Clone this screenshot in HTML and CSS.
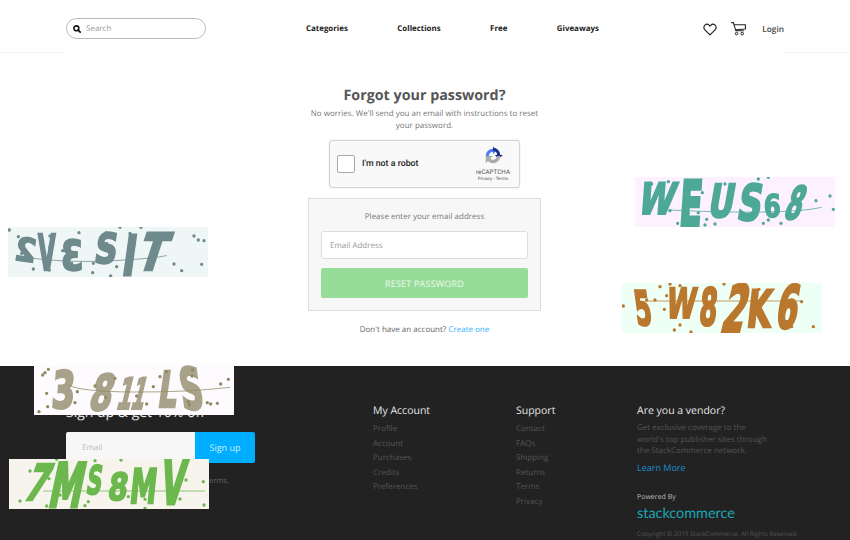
FILE: index.html
```html
<!DOCTYPE html>
<html lang="en">
<head>
<meta charset="utf-8">
<title>Forgot your password?</title>
<link rel="stylesheet" href="styles.css">
</head>
<body>
<div class="logo-clip"><span></span><span></span></div>
<header class="site-header">
  <div class="header-inner">
    <label class="search">
      <svg class="search-icon" viewBox="0 0 10 10" width="8" height="8"><circle cx="4.200" cy="4.200" r="3.100" fill="none" stroke="#111" stroke-width="1.900"/><path d="M6.400 6.400L9 9" stroke="#111" stroke-width="2.200" stroke-linecap="round"/></svg>
      <span class="search-text">Search</span>
    </label>
    <nav class="main-nav">
      <a>Categories</a><a>Collections</a><a>Free</a><a>Giveaways</a>
    </nav>
    <div class="user-nav">
      <svg class="heart" viewBox="0 0 14 13" width="14" height="13"><path d="M7 11.900L1.900 6.800C.5 5.400.6 3.300 1.900 2.100 3.200 1 5.200 1.100 6.300 2.300L7 3.100l.7-.8C8.800 1.100 10.800 1 12.100 2.100c1.300 1.200 1.400 3.300 0 4.700z" fill="none" stroke="#222" stroke-width="1.200" stroke-linejoin="round"/></svg>
      <svg class="cart" viewBox="0 0 15 14" width="15" height="14"><path d="M.3.6h2.100l2.400 8.200h8M3.200 2.800h11.200v4.300l-9.900.7" fill="none" stroke="#222" stroke-width="1.100"/><circle cx="5.600" cy="11.600" r="1.300" fill="none" stroke="#222"/><circle cx="11.200" cy="11.600" r="1.300" fill="none" stroke="#222"/></svg>
      <a class="login">Login</a>
    </div>
  </div>
</header>

<main class="main">
  <h1 class="title">Forgot your password?</h1>
  <p class="lead">No worries. We'll send you an email with instructions to reset your password.</p>
  <div class="recaptcha">
    <span class="check"></span>
    <span class="robot">I'm not a robot</span>
    <div class="rc-brand">
      <svg viewBox="0 0 22 22" width="20" height="20"><path d="M3 11A8 8 0 0 1 11 3V0l4 5-4 4V6.500A4.500 4.500 0 0 0 6.500 11z" fill="#4a7ff0"/><path d="M11 3a8 8 0 0 1 8 8h3l-5 4-4-4h2.500A4.500 4.500 0 0 0 11 6.500z" fill="#1c2d8c" transform="translate(0 -1)"/><path d="M19 11a8 8 0 0 1-13.700 5.600L3 19V11h8l-3 3a4.500 4.500 0 0 0 7.500-3z" fill="#ababab"/></svg>
      <span class="rc-name">reCAPTCHA</span>
      <span class="rc-links">Privacy - Terms</span>
    </div>
  </div>
  <form class="reset-box">
    <p class="reset-label">Please enter your email address</p>
    <div class="reset-input">Email Address</div>
    <div class="reset-btn">RESET PASSWORD</div>
  </form>
  <p class="signup-hint">Don't have an account? <a>Create one</a></p>
</main>

<footer class="footer">
  <div class="footer-grid">
    <div class="col-signup">
      <h3 class="signup-title">Sign up &amp; get 10% off</h3>
      <div class="signup-form">
        <div class="signup-input">Email</div>
        <div class="signup-btn">Sign up</div>
      </div>
      <p class="signup-terms"><span>By signing up, you agree to our Privacy &amp; Terms.</span></p>
    </div>
    <div>
      <h4 class="col-title">My Account</h4>
      <ul class="links"><li>Profile</li><li>Account</li><li>Purchases</li><li>Credits</li><li>Preferences</li></ul>
    </div>
    <div>
      <h4 class="col-title">Support</h4>
      <ul class="links"><li>Contact</li><li>FAQs</li><li>Shipping</li><li>Returns</li><li>Terms</li><li>Privacy</li></ul>
    </div>
    <div>
      <h4 class="col-title">Are you a vendor?</h4>
      <p class="vendor-copy">Get exclusive coverage to the world's top publisher sites through the StackCommerce network.</p>
      <a class="learn">Learn More</a>
      <p class="powered">Powered By</p>
      <p class="stack">stackcommerce</p>
      <p class="copyright">Copyright © 2019 StackCommerce. All Rights Reserved.</p>
    </div>
  </div>
</footer>

<svg class="captcha cap-a" viewBox="24 21 600 150" width="200" height="50">
  <rect class="bg" x="24" y="21" width="600" height="150"/>
  <g class="ink">
    <text transform="translate(104 128) rotate(8) scale(-.78 .82)">2</text>
    <text transform="translate(114 150) scale(.58 1.25)">V</text>
    <text transform="translate(250 150) scale(-.82 1.05)">3</text>
    <text transform="translate(280 130) skewX(-8) scale(.8 1.05)">S</text>
    <text transform="translate(362 165) skewX(-8) scale(.9 1.4)">I</text>
    <text transform="translate(405 150) skewX(-18) scale(1 1.3)">T</text>
  </g>
  <path class="line" d="M75 112Q200 130 340 122T500 106"/>
  <path class="dots" d="M28 30h0M55 50h0M150 48h0M237 38h0M318 38h0M360 22h0M390 40h0M423 22h0M582 48h0M595 60h0M612 62h0M150 80h0M188 92h0M232 72h0M320 70h0M65 100h0M100 147h0M148 150h0M215 130h0M280 130h0M295 125h0M278 158h0M350 140h0M332 168h0M522 132h0M545 152h0M605 133h0"/>
</svg>

<svg class="captcha cap-b" viewBox="30 21 600 150" width="200" height="50">
  <rect class="bg" x="30" y="21" width="600" height="150"/>
  <g class="ink">
    <text transform="translate(34 132) skewX(-14) scale(.82 1.1)">W</text>
    <text transform="translate(160 168) skewX(-4) scale(.85 1.6)">E</text>
    <text transform="translate(245 142) skewX(-10) scale(.8 1.15)">U</text>
    <text transform="translate(332 150) skewX(-10) scale(.85 1.25)">S</text>
    <text transform="translate(416 142) scale(.62 .8)">6</text>
    <text transform="translate(472 146) skewX(-18) scale(.62 1.15)">8</text>
  </g>
  <path class="line" d="M130 120Q300 128 420 126T590 112"/>
  <path class="dots" d="M130 35h0M80 42h0M400 27h0M430 22h0M300 42h0M232 68h0M385 100h0M530 75h0M615 78h0M573 92h0M625 118h0M135 122h0M220 128h0M190 130h0M158 160h0M245 148h0M270 162h0M240 165h0M415 160h0M430 150h0M468 160h0"/>
</svg>

<svg class="captcha cap-c" viewBox="21 24 600 150" width="200" height="50">
  <rect class="bg" x="21" y="24" width="600" height="150"/>
  <g class="ink">
    <text transform="translate(66 150) skewX(8) scale(.6 1.2)">5</text>
    <text transform="translate(150 130) skewX(-8) scale(.68 1.05)">W</text>
    <text transform="translate(250 150) skewX(-5) scale(.65 1.3)">8</text>
    <text transform="translate(312 170) skewX(-14) scale(.85 1.65)">2</text>
    <text transform="translate(392 155) skewX(-6) scale(.78 1.3)">K</text>
    <text transform="translate(478 160) skewX(-10) scale(.78 1.5)">6</text>
  </g>
  <path class="line" d="M90 78H560"/>
  <path class="dots" d="M25 93h0M135 35h0M95 75h0M120 75h0M155 62h0M195 32h0M165 27h0M327 27h0M382 35h0M432 43h0M148 103h0M195 150h0M178 165h0M228 171h0M530 155h0M560 80h0M595 155h0"/>
</svg>

<svg class="captcha cap-d" viewBox="102 15 600 150" width="200" height="50">
  <rect class="bg" x="102" y="15" width="600" height="150"/>
  <g class="ink">
    <text transform="translate(152 144) skewX(-4) scale(.85 1.3)">3</text>
    <text transform="translate(262 150) skewX(-14) scale(.82 1.25)">8</text>
    <text transform="translate(345 148) skewX(-14) scale(.55 1.1)">1</text>
    <text transform="translate(388 148) skewX(-14) scale(.5 1.1)">1</text>
    <text transform="translate(470 142) skewX(-8) scale(.75 1.25)">L</text>
    <text transform="translate(548 148) skewX(8) scale(.8 1.45)">S</text>
  </g>
  <path class="line" d="M205 75Q240 95 400 96T690 82"/>
  <path class="dots" d="M128 45h0M135 38h0M145 28h0M140 100h0M117 155h0M143 140h0M225 128h0M232 95h0M285 78h0M345 55h0M318 112h0M410 108h0M440 132h0M460 80h0M480 50h0M500 35h0M578 30h0M576 48h0M565 125h0M568 135h0M622 128h0M632 132h0M652 130h0M662 72h0M685 58h0"/>
</svg>

<svg class="captcha cap-e" viewBox="27 297 600 150" width="200" height="50">
  <rect class="bg" x="27" y="297" width="600" height="150"/>
  <g class="ink">
    <text transform="translate(66 420) skewX(-20) scale(.8 1.25)">7</text>
    <text transform="translate(140 440) skewX(-12) scale(.85 1.55)">M</text>
    <text transform="translate(256 402) skewX(-8) scale(.55 1)">S</text>
    <text transform="translate(320 420) skewX(-8) scale(.72 .95)">8</text>
    <text transform="translate(386 430) skewX(-6) scale(.68 1.2)">M</text>
    <text transform="translate(476 432) skewX(-8) scale(.8 1.55)">V</text>
  </g>
  <path class="line" d="M130 393H615"/>
  <path class="dots" d="M90 333h0M147 356h0M285 302h0M363 300h0M60 423h0M140 438h0M180 405h0M255 437h0M265 425h0M385 410h0M435 418h0M435 445h0M540 417h0M558 360h0M612 435h0M610 365h0M170 298h0"/>
</svg>
</body>
</html>
```

FILE: styles.css
```css
* { box-sizing: border-box; }
html, body { margin: 0; padding: 0; }
body {
  position: relative;
  width: 850px;
  height: 540px;
  overflow: hidden;
  background: #fff;
  font-family: "Open Sans", sans-serif;
  color: #555;
  text-rendering: geometricPrecision;
}
h1, h3, h4, p, ul { margin: 0; padding: 0; }
ul { list-style: none; }

.logo-clip { position: absolute; left: 385px; top: 0; display: flex; gap: 3px; }
.logo-clip span { width: 11px; height: 1px; background: #222; }

.site-header { height: 53px; border-bottom: 1px solid #f3f3f3; }
.header-inner {
  position: relative;
  height: 53px;
  width: 718px;
  margin: 0 auto;
  background: #fff;
  display: flex;
  align-items: center;
  padding-top: 5px;
}
.search {
  width: 140px;
  height: 21px;
  margin-top: -1px;
  border: 1px solid #b9b9b9;
  border-radius: 11px;
  display: flex;
  align-items: center;
  gap: 5px;
  padding-left: 6px;
}
.search-icon { flex: none; }
.search-text { font-size: 8px; color: #999; }
.main-nav { display: flex; gap: 49.500px; margin-left: 100px; font-size: 7.900px; font-weight: 700; color: #222; }
.user-nav { display: flex; align-items: center; margin-left: auto; }
.heart { margin-right: 14px; }
.cart { margin-right: 16px; }
.login { font-size: 8.300px; font-weight: 600; color: #444; }

.main { height: 313px; display: flex; flex-direction: column; align-items: center; padding: 33px 1px 0 0; }
.title { font-size: 14.300px; font-weight: 700; line-height: 20px; color: #555; }
.lead { width: 240px; margin-top: 2px; font-size: 8px; line-height: 12px; text-align: center; color: #777; }
.recaptcha {
  width: 191px;
  height: 48px;
  margin-top: 8px;
  display: flex;
  align-items: center;
  padding-left: 7px;
  background: #f9f9f9;
  border: 1px solid #d3d3d3;
  border-radius: 3px;
  box-shadow: 0 0 3px rgba(0,0,0,.08);
}
.check { width: 18px; height: 18px; background: #fff; border: 1px solid #a8a8a8; border-radius: 2px; }
.robot { margin-left: 7px; font-family: Roboto, sans-serif; font-size: 8.800px; font-weight: 500; color: #222; }
.rc-brand { margin-left: auto; width: 40px; margin-right: 6px; display: flex; flex-direction: column; align-items: center; }
.rc-name { margin-top: 2px; font-family: Roboto, sans-serif; font-size: 6.300px; line-height: 8px; color: #555; }
.rc-links { font-family: Roboto, sans-serif; font-size: 4.500px; line-height: 7px; color: #555; }

.reset-box {
  width: 233px;
  height: 113px;
  margin-top: 10px;
  padding: 12px 12px 0;
  background: #f7f7f7;
  border: 1px solid #dcdcdc;
}
.reset-label { font-size: 8px; line-height: 12px; text-align: center; color: #777; }
.reset-input {
  height: 28px;
  margin-top: 8px;
  padding-left: 8px;
  background: #fff;
  border: 1px solid #ddd;
  border-radius: 3px;
  font-size: 8px;
  line-height: 27px;
  color: #999;
}
.reset-btn {
  height: 30px;
  margin-top: 9px;
  background: #98dc9a;
  border-radius: 2px;
  font-size: 9px;
  letter-spacing: .2px;
  line-height: 31px;
  text-align: center;
  color: #eaf8ea;
}
.signup-hint { margin-top: 13px; font-size: 8px; line-height: 12px; color: #666; }
.signup-hint a { color: #2db2ff; }

.footer { height: 174px; background: #222; }
.footer-grid {
  width: 718px;
  margin: 0 auto;
  padding-top: 38px;
  display: grid;
  grid-template-columns: 307px 143px 121px 147px;
}
.signup-title { font-size: 14px; font-weight: 400; line-height: 18px; color: #eee; }
.signup-form { display: flex; margin-top: 10px; width: 189px; height: 31px; }
.signup-input { width: 129px; padding-left: 16px; background: #f7f7f7; border-radius: 2px 0 0 2px; font-size: 8px; line-height: 31px; color: #bbb; }
.signup-btn { width: 60px; background: #00aeff; border-radius: 0 2px 2px 0; font-size: 9px; line-height: 31px; text-align: center; color: #cfeeff; }
.signup-terms { display: flex; justify-content: flex-end; width: 163px; margin-top: 12px; font-size: 7.500px; line-height: 12px; white-space: nowrap; color: #666; }
.col-title { font-size: 10.500px; font-weight: 400; line-height: 15px; color: #e6e6e6; }
.links { margin-top: 3px; font-size: 8px; line-height: 14.600px; color: #555; }
.vendor-copy { width: 135px; margin-top: 3px; font-size: 8px; line-height: 11.500px; color: #555; }
.learn { display: block; margin-top: 5.500px; font-size: 9px; line-height: 12px; color: #1a8fd0; }
.powered { margin-top: 19px; font-size: 7px; line-height: 10px; color: #bbb; }
.stack { margin-top: 2px; font-family: Lato, sans-serif; font-size: 14.400px; font-weight: 400; line-height: 18px; color: #1aa6b7; white-space: nowrap; }
.copyright { margin-top: 6px; font-size: 6.300px; line-height: 9px; white-space: nowrap; color: #555; }

.captcha { position: absolute; display: block; }
.captcha .ink { font-family: "DejaVu Sans", sans-serif; font-size: 118px; font-weight: 700; stroke-width: 6; filter: blur(1.500px); }
.captcha .line { fill: none; stroke-width: 3; opacity: .75; }
.captcha .dots { fill: none; stroke-width: 10; stroke-linecap: round; }
.cap-a { left: 8px; top: 227px; }
.cap-a .bg { fill: #eff6f6; }
.cap-a .ink { fill: #6f8a8c; stroke: #6f8a8c; }
.cap-a .line, .cap-a .dots { stroke: #6f8a8c; }
.cap-b { left: 635px; top: 177px; }
.cap-b .bg { fill: #fdf0ff; }
.cap-b .ink { fill: #4ea898; stroke: #4ea898; }
.cap-b .line, .cap-b .dots { stroke: #4ea898; }
.cap-c { left: 622px; top: 283px; }
.cap-c .bg { fill: #eefff5; }
.cap-c .ink { fill: #b9782d; stroke: #b9782d; }
.cap-c .line, .cap-c .dots { stroke: #b9782d; }
.cap-d { left: 34px; top: 365px; }
.cap-d .bg { fill: #fdfbfd; }
.cap-d .ink { fill: #a8a28a; stroke: #a8a28a; }
.cap-d .line { stroke: #8f8a60; }
.cap-d .dots { stroke: #8f8a60; }
.cap-e { left: 9px; top: 459px; }
.cap-e .bg { fill: #f7f4ee; }
.cap-e .ink { fill: #6cb84e; stroke: #6cb84e; }
.cap-e .line, .cap-e .dots { stroke: #6cb84e; }
```
